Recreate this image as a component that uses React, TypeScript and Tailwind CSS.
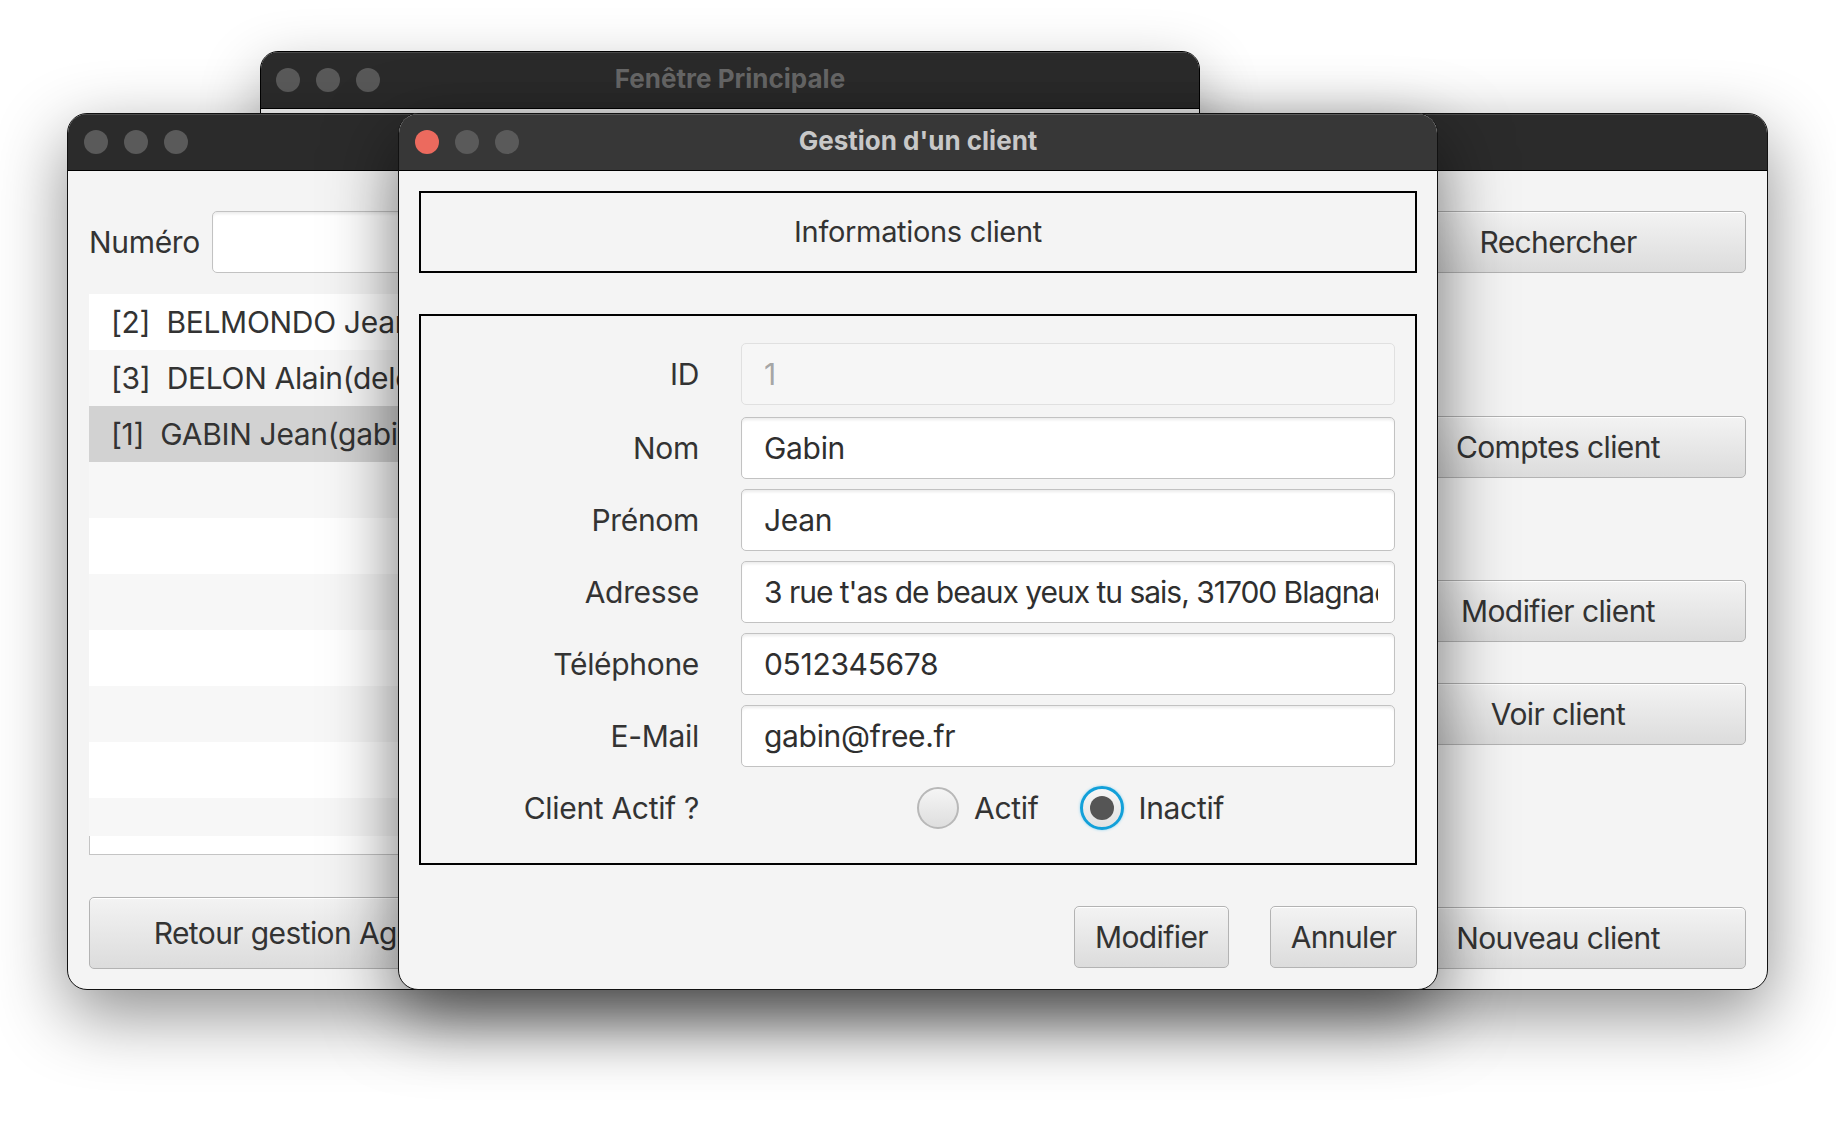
import React from 'react';

const Lights = ({ active = false }: { active?: boolean }) => (
  <div className="flex items-center gap-[16px]">
    <span className={`w-[24px] h-[24px] rounded-full ${active ? 'bg-[#ec6a5e]' : 'bg-[#5a5a5a]'}`} />
    <span className="w-[24px] h-[24px] rounded-full bg-[#5a5a5a]" />
    <span className="w-[24px] h-[24px] rounded-full bg-[#5a5a5a]" />
  </div>
);

const FxButton = ({ label, className = '' }: { label: string; className?: string }) => (
  <button
    className={`h-[62px] rounded-[5px] border border-[#b3b3b3] bg-gradient-to-b from-[#f3f3f3] to-[#dcdcdc] shadow-[inset_0_1px_0_#ffffff] text-[30px] tracking-[-0.02em] text-[#333333] whitespace-nowrap ${className}`}
  >
    {label}
  </button>
);

const Field = ({ value, disabled = false, tight = false }: { value: string; disabled?: boolean; tight?: boolean }) => (
  <div
    className={`h-[62px] w-[654px] rounded-[5px] border flex items-center pl-[22px] pr-[16px] text-[30px] ${
      disabled
        ? 'border-[#e0e0e0] bg-[#f6f6f6] text-[#a6a6a6]'
        : 'border-[#c2c2c2] bg-white text-[#2f2f2f] shadow-[inset_0_3px_3px_-1px_rgba(0,0,0,0.08)]'
    }`}
  >
    <div className={`flex-1 overflow-hidden whitespace-nowrap ${tight ? 'tracking-[-0.034em]' : ''}`}>{value}</div>
  </div>
);

const rows = [
  { label: 'ID', value: '1', disabled: true },
  { label: 'Nom', value: 'Gabin' },
  { label: 'Prénom', value: 'Jean' },
  { label: 'Adresse', value: "3 rue t'as de beaux yeux tu sais, 31700 Blagnac", tight: true },
  { label: 'Téléphone', value: '0512345678' },
  { label: 'E-Mail', value: 'gabin@free.fr' },
];

const clients = [
  '[2]  BELMONDO Jean(belmondo@free.fr) : 0512345679',
  '[3]  DELON Alain(delon@free.fr) : 0512345670',
  '[1]  GABIN Jean(gabin@free.fr) : 0512345678',
];

export default function App() {
  return (
    <div className="relative w-[1836px] h-[1138px] overflow-hidden bg-white font-['Inter',sans-serif] tracking-[-0.02em] text-[#333333]">
      {/* Fenêtre principale (behind) */}
      <div className="absolute left-[260px] top-[51px] w-[940px] h-[200px] rounded-t-[18px] border border-black bg-[#f4f4f4] overflow-hidden shadow-[0_20px_60px_rgba(0,0,0,0.3)]">
        <div className="relative h-[57px] bg-[#2b2b2b] border-b border-black flex items-center pl-[15px] shadow-[inset_0_1px_0_#4a4a4a]">
          <Lights />
          <div className="absolute inset-0 pb-[3px] flex items-center justify-center text-[26px] font-bold tracking-normal text-[#686868]">
            Fenêtre Principale
          </div>
        </div>
      </div>

      {/* Gestion clients (middle) */}
      <div className="absolute left-[67px] top-[113px] w-[1701px] h-[877px] rounded-[20px] border border-[#111111] bg-[#f4f4f4] overflow-hidden flex flex-col shadow-[0_24px_70px_rgba(0,0,0,0.45)]">
        <div className="h-[57px] shrink-0 bg-[#2b2b2b] border-b border-black flex items-center pl-[16px] shadow-[inset_0_1px_0_#4a4a4a]">
          <Lights />
        </div>
        <div className="flex-1 flex justify-between px-[21px]">
          <div className="w-[460px] flex flex-col">
            <div className="mt-[40px] flex items-center gap-[12px]">
              <span className="text-[30px]">Numéro</span>
              <div className="h-[62px] w-[260px] rounded-[5px] border border-[#c2c2c2] bg-white shadow-[inset_0_3px_3px_-1px_rgba(0,0,0,0.08)]" />
            </div>
            <div className="mt-[21px] h-[561px] flex flex-col overflow-hidden">
              {clients.map((c, i) => (
                <div
                  key={c}
                  className={`h-[56px] shrink-0 flex items-center pl-[22px] text-[30px] whitespace-pre ${
                    i === 2 ? 'bg-[#d2d2d2]' : i % 2 === 0 ? 'bg-white' : 'bg-[#f7f7f7]'
                  }`}
                >
                  {c}
                </div>
              ))}
              {[3, 4, 5, 6, 7, 8].map((i) => (
                <div key={i} className={`h-[56px] shrink-0 ${i % 2 === 0 ? 'bg-white' : 'bg-[#f7f7f7]'}`} />
              ))}
              <div className="h-[38px] shrink-0 bg-[#f7f7f7]" />
              <div className="flex-1 bg-white border-l border-b border-[#c4c4c4]" />
            </div>
            <FxButton label="Retour gestion Agence" className="mt-[42px] h-[72px] w-[440px]" />
          </div>

          <div className="w-[376px] flex flex-col">
            <FxButton label="Rechercher" className="mt-[40px]" />
            <FxButton label="Comptes client" className="mt-[143px]" />
            <FxButton label="Modifier client" className="mt-[102px]" />
            <FxButton label="Voir client" className="mt-[41px]" />
            <FxButton label="Nouveau client" className="mt-[162px]" />
          </div>
        </div>
      </div>

      {/* Gestion d'un client (front) */}
      <div className="absolute left-[398px] top-[113px] w-[1040px] h-[877px] rounded-[20px] border border-[#111111] bg-[#f4f4f4] overflow-hidden flex flex-col shadow-[0_26px_70px_rgba(0,0,0,0.55)]">
        <div className="relative h-[57px] shrink-0 bg-[#373737] border-b border-black flex items-center pl-[16px] shadow-[inset_0_1px_0_#5a5a5a]">
          <Lights active />
          <div className="absolute inset-0 pb-[4px] flex items-center justify-center text-[26px] font-bold tracking-normal text-[#c8c8c8]">
            Gestion d'un client
          </div>
        </div>
        <div className="flex-1 flex flex-col px-[20px]">
          <div className="mt-[20px] h-[82px] border-2 border-black flex items-center justify-center text-[29px]">
            Informations client
          </div>

          <div className="mt-[41px] h-[551px] border-2 border-black flex flex-col gap-[10px] pt-[27px] pr-[20px]">
            {rows.map((r, i) => (
              <div key={r.label} className={`flex items-center gap-[42px] ${i === 0 ? 'mb-[2px]' : ''}`}>
                <span className="w-[278px] text-right text-[30px]">{r.label}</span>
                <Field value={r.value} disabled={r.disabled} tight={r.tight} />
              </div>
            ))}
            <div className="flex items-center gap-[42px] h-[62px]">
              <span className="w-[278px] text-right text-[30px]">Client Actif ?</span>
              <div className="flex items-center pl-[176px] text-[30px]">
                <span className="w-[42px] h-[42px] rounded-full border-2 border-[#b8b8b8] bg-gradient-to-b from-[#f5f5f5] to-[#dedede]" />
                <span className="ml-[15px]">Actif</span>
                <span className="ml-[42px] w-[44px] h-[44px] rounded-full border-[3px] border-[#12a0d9] shadow-[0_0_3px_#8fd3f0] flex items-center justify-center bg-gradient-to-b from-[#f6f6f6] to-[#e2e2e2]">
                  <span className="w-[24px] h-[24px] rounded-full bg-[#555555]" />
                </span>
                <span className="ml-[14px]">Inactif</span>
              </div>
            </div>
          </div>

          <div className="mt-[41px] flex justify-end gap-[41px]">
            <FxButton label="Modifier" className="w-[155px]" />
            <FxButton label="Annuler" className="w-[147px]" />
          </div>
        </div>
      </div>
    </div>
  );
}
